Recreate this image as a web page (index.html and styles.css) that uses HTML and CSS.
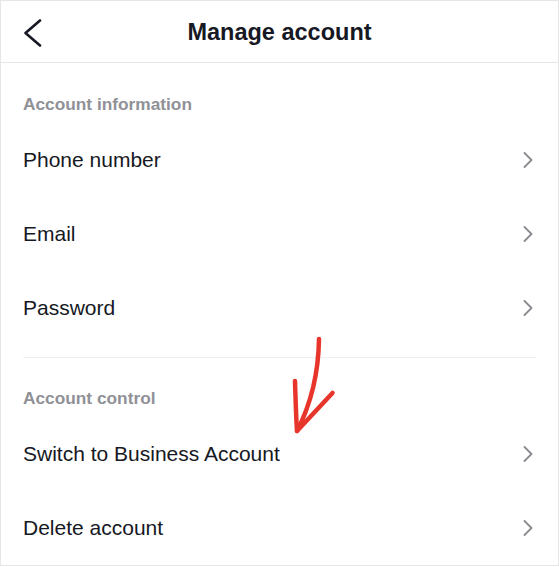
FILE: index.html
```html
<!DOCTYPE html>
<html lang="en">
<head>
  <meta charset="UTF-8" />
  <meta name="viewport" content="width=device-width, initial-scale=1" />
  <title>Manage account</title>
  <link rel="stylesheet" href="styles.css">
</head>
<body>

  <div class="screen">
    <header class="top-bar">
      <button class="back-btn" aria-label="Back">
        <svg width="18" height="28" viewBox="0 0 18 28">
          <polyline points="16,1.5 1.5,14 16,26.5" />
        </svg>
      </button>
      <h1>Manage account</h1>
      <span></span>
    </header>

    <section class="group">
      <div class="group-label">Account information</div>
      <a class="row" href="#"><span>Phone number</span><svg class="chev" width="10" height="16" viewBox="0 0 10 16"><polyline points="1.5,1 8.5,8 1.5,15" /></svg></a>
      <a class="row" href="#"><span>Email</span><svg class="chev" width="10" height="16" viewBox="0 0 10 16"><polyline points="1.5,1 8.5,8 1.5,15" /></svg></a>
      <a class="row" href="#"><span>Password</span><svg class="chev" width="10" height="16" viewBox="0 0 10 16"><polyline points="1.5,1 8.5,8 1.5,15" /></svg></a>
    </section>

    <div class="divider"></div>

    <section class="group group-second">
      <div class="group-label">Account control</div>
      <a class="row" href="#"><span>Switch to Business Account</span><svg class="chev" width="10" height="16" viewBox="0 0 10 16"><polyline points="1.5,1 8.5,8 1.5,15" /></svg></a>
      <a class="row" href="#"><span>Delete account</span><svg class="chev" width="10" height="16" viewBox="0 0 10 16"><polyline points="1.5,1 8.5,8 1.5,15" /></svg></a>
    </section>

    <!-- red hand-drawn arrow pointing at the business account row -->
    <svg class="annotation" width="559" height="566" viewBox="0 0 559 566">
      <path d="M319 339 C318.5 372 312 402 297 431" />
      <path d="M295 381 C295.5 398 296 415 297 431 L332.5 393" />
    </svg>
  </div>

</body>
</html>
```

FILE: styles.css
```css
body {
  margin: 0;
  background: #fff;
  font-family: 'Liberation Sans', Arial, sans-serif;
  color: #161823;
}

.screen {
  position: relative;
  width: 559px;
  height: 566px;
  box-sizing: border-box;
  border: 1px solid #e6e6e7;
  background: #fff;
  overflow: hidden;
}

.top-bar {
  display: grid;
  grid-template-columns: 1fr auto 1fr;
  align-items: center;
  height: 61px;
  border-bottom: 1px solid #e6e6e7;
}

.back-btn {
  justify-self: start;
  margin-left: 23px;
  margin-top: 2px;
  padding: 0;
  border: none;
  background: none;
  display: flex;
}

.back-btn polyline {
  fill: none;
  stroke: #161823;
  stroke-width: 2.6;
  stroke-linecap: round;
  stroke-linejoin: round;
}

.top-bar h1 {
  margin: 2px 0 0;
  font-size: 23.5px;
  font-weight: 700;
}

.group-label {
  padding: 30px 22px 8px;
  line-height: 22px;
  font-size: 17.3px;
  font-weight: 700;
  color: #909197;
}

.group-second .group-label {
  padding-top: 29px;
}

.row {
  display: flex;
  align-items: center;
  justify-content: space-between;
  height: 74px;
  padding: 0 25px 0 22px;
  font-size: 21px;
  color: #161823;
  text-decoration: none;
}

.chev polyline {
  fill: none;
  stroke: #8a8b91;
  stroke-width: 1.8;
  stroke-linecap: round;
  stroke-linejoin: round;
}

.divider {
  height: 1px;
  margin: 12px 22px 0 22px;
  background: #f0f0f1;
}

.annotation {
  position: absolute;
  left: -1px;
  top: -1px;
  pointer-events: none;
}

.annotation path {
  fill: none;
  stroke: #e8352b;
  stroke-width: 4.5;
  stroke-linecap: round;
  stroke-linejoin: round;
}
```
